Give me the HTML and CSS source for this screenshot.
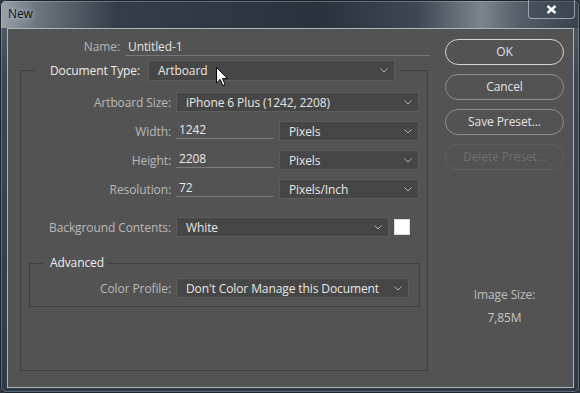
FILE: index.html
```html
<!DOCTYPE html>
<html lang="en">
<head>
    <meta charset="UTF-8">
    <meta name="viewport" content="width=device-width, initial-scale=1.0">
    <title>New</title>
    <link rel="stylesheet" href="styles.css">
</head>
<body>

    <div class="window">
        <div class="titlebar">
            <span class="title">New</span>
            <div class="close">
                <svg width="11" height="9" viewBox="0 0 11 9"><path d="M1.5 1 L9.5 8 M9.5 1 L1.5 8" stroke="#fff" stroke-width="2.4" fill="none"/></svg>
            </div>
        </div>

        <div class="panel">
            <div class="form">
                <div class="name-row">
                    <span class="name-label">Name:</span>
                    <span class="name-value">Untitled-1</span>
                </div>

                <fieldset class="group">
                    <legend class="group-head">
                        <span class="head-label">Document Type:</span>
                        <div class="select doc-select">
                            <span>Artboard</span>
                            <svg class="chev" width="8" height="5" viewBox="0 0 8 5"><path d="M0.5 0.5 L4 4 L7.5 0.5" stroke="#b4b4b4" fill="none"/></svg>
                        </div>
                    </legend>

                    <div class="row size-row">
                        <label>Artboard Size:</label>
                        <div class="select wide">
                            <span>iPhone 6 Plus (1242, 2208)</span>
                            <svg class="chev" width="8" height="5" viewBox="0 0 8 5"><path d="M0.5 0.5 L4 4 L7.5 0.5" stroke="#b4b4b4" fill="none"/></svg>
                        </div>
                    </div>
                    <div class="row">
                        <label>Width:</label>
                        <div class="field">1242</div>
                        <div class="select unit">
                            <span>Pixels</span>
                            <svg class="chev" width="8" height="5" viewBox="0 0 8 5"><path d="M0.5 0.5 L4 4 L7.5 0.5" stroke="#b4b4b4" fill="none"/></svg>
                        </div>
                    </div>
                    <div class="row">
                        <label>Height:</label>
                        <div class="field">2208</div>
                        <div class="select unit">
                            <span>Pixels</span>
                            <svg class="chev" width="8" height="5" viewBox="0 0 8 5"><path d="M0.5 0.5 L4 4 L7.5 0.5" stroke="#b4b4b4" fill="none"/></svg>
                        </div>
                    </div>
                    <div class="row">
                        <label>Resolution:</label>
                        <div class="field">72</div>
                        <div class="select unit">
                            <span>Pixels/Inch</span>
                            <svg class="chev" width="8" height="5" viewBox="0 0 8 5"><path d="M0.5 0.5 L4 4 L7.5 0.5" stroke="#b4b4b4" fill="none"/></svg>
                        </div>
                    </div>
                    <div class="row bg-row">
                        <label>Background Contents:</label>
                        <div class="select bg-select">
                            <span>White</span>
                            <svg class="chev" width="8" height="5" viewBox="0 0 8 5"><path d="M0.5 0.5 L4 4 L7.5 0.5" stroke="#b4b4b4" fill="none"/></svg>
                        </div>
                        <span class="swatch"></span>
                    </div>

                    <fieldset class="advanced">
                        <legend class="adv-head">Advanced</legend>
                        <div class="row">
                            <label>Color Profile:</label>
                            <div class="select profile">
                                <span>Don't Color Manage this Document</span>
                                <svg class="chev" width="8" height="5" viewBox="0 0 8 5"><path d="M0.5 0.5 L4 4 L7.5 0.5" stroke="#b4b4b4" fill="none"/></svg>
                            </div>
                        </div>
                    </fieldset>
                </fieldset>
            </div>

            <div class="side">
                <div class="btn default">OK</div>
                <div class="btn">Cancel</div>
                <div class="btn">Save Preset...</div>
                <div class="btn disabled">Delete Preset...</div>
                <div class="size-label">Image Size:</div>
                <div class="size-value">7,85M</div>
            </div>
        </div>

        <svg class="cursor" width="13" height="20" viewBox="0 0 13 20"><path d="M0.5 0.5 L0.5 16 L4.2 12.4 L6.8 18.6 L9.2 17.6 L6.6 11.6 L11.5 11.6 Z" fill="#fff" stroke="#000" stroke-width="1"/></svg>
    </div>

</body>
</html>
```

FILE: styles.css
```css
* {
    box-sizing: border-box;
}
body {
    margin: 0;
    background-color: #2b3540;
    font-family: "Open Sans", "Noto Sans", sans-serif;
    font-size: 12px;
    letter-spacing: -0.1px;
}
.window {
    position: relative;
    width: 580px;
    height: 393px;
    border-radius: 6px;
    overflow: hidden;
    background:
        linear-gradient(to right, #9aa2aa 0%, #6d7780 6%, #323e49 20%, #28333e 55%, #3c4853 72%, #7b858e 83%, #56616c 89%, #35414c 100%) top / 100% 28px no-repeat,
        linear-gradient(to bottom, #56616b 0%, #3a4652 20%, #2e3a46 100%);
    box-shadow: inset 0 0 0 1px #1b242c, inset 0 0 0 2px rgba(190, 200, 210, 0.35);
}
.titlebar {
    display: flex;
    height: 28px;
}
.title {
    padding-left: 8px;
    line-height: 27px;
    color: #101417;
    text-shadow: 0 0 6px rgba(255, 255, 255, 0.7);
}
.close {
    display: flex;
    align-items: center;
    justify-content: center;
    width: 47px;
    height: 19px;
    margin-left: auto;
    margin-right: 5px;
    border: 1px solid rgba(185, 195, 205, 0.75);
    border-top: none;
    border-radius: 0 0 4px 4px;
    background-color: rgba(60, 72, 84, 0.5);
}
.panel {
    display: flex;
    width: 567px;
    height: 360px;
    margin-left: 7px;
    border: 1px solid #aab4bd;
    background-color: #535353;
}

/* left side */
.form {
    width: 422px;
}
.name-row {
    display: flex;
    margin-top: 8px;
    height: 19px;
}
.name-label {
    width: 112px;
    text-align: right;
    line-height: 19px;
    color: #b6b6b6;
}
.name-value {
    width: 305px;
    margin-left: 5px;
    padding-left: 3px;
    line-height: 19px;
    color: #e2e2e2;
    border-bottom: 1px solid #767676;
}
.group {
    width: 408px;
    margin: 4px 0 0 12px;
    padding: 0 0 63px 0;
    border: 1px solid #3e3e3e;
    min-width: 0;
}
.group-head {
    display: flex;
    align-items: center;
    margin-left: 14px;
    padding: 0 6px 0 0;
}
.head-label {
    width: 105px;
    text-align: right;
    color: #ececec;
}
.select {
    display: flex;
    align-items: center;
    height: 20px;
    padding: 0 6px 0 9px;
    border: 1px solid #5c5c5c;
    background-color: #464646;
    color: #e6e6e6;
}
.select span {
    flex: 1;
    white-space: nowrap;
}
.chev {
    display: block;
}
.doc-select {
    width: 247px;
    margin-left: 8px;
    height: 21px;
}
.row {
    display: flex;
    align-items: center;
    height: 20px;
    margin-top: 9px;
}
.size-row {
    margin-top: 11px;
}
.row label {
    width: 150px;
    margin-right: 5px;
    text-align: right;
    color: #b9b9b9;
}
.wide {
    width: 243px;
}
.field {
    width: 98px;
    height: 18px;
    padding-left: 3px;
    line-height: 17px;
    color: #e8e8e8;
    border-bottom: 1px solid #7a7a7a;
    align-self: flex-start;
}
.unit {
    width: 140px;
    margin-left: 5px;
}
.bg-row {
    margin-top: 18px;
}
.bg-select {
    width: 213px;
}
.swatch {
    width: 16px;
    height: 16px;
    margin-left: 5px;
    background-color: #fff;
    border: 1px solid #dcdcdc;
}
.advanced {
    width: 391px;
    margin: 18px 0 0 8px;
    padding: 0 0 8px 0;
    border: 1px solid #3e3e3e;
    min-width: 0;
}
.adv-head {
    margin-left: 13px;
    padding: 0 3px 0 7px;
    line-height: 16px;
    color: #ececec;
}
.advanced .row {
    margin-top: 7px;
}
.advanced .row label {
    width: 141px;
}
.profile {
    width: 233px;
}

/* right side */
.side {
    display: flex;
    flex-direction: column;
    width: 119px;
    margin-left: 15px;
    padding-top: 10px;
}
.btn {
    height: 26px;
    margin-bottom: 9px;
    line-height: 24px;
    text-align: center;
    color: #e2e2e2;
    border: 1px solid #8e8e8e;
    border-radius: 13px;
}
.btn.default {
    border-color: #d4d4d4;
}
.btn.disabled {
    color: #6f6f6f;
    border-color: #5f5f5f;
}
.size-label {
    margin-top: 108px;
    line-height: 16px;
    text-align: center;
    color: #bdbdbd;
}
.size-value {
    margin-top: 7px;
    line-height: 16px;
    text-align: center;
    color: #c4c4c4;
}
.cursor {
    position: absolute;
    left: 216px;
    top: 67px;
}
```
